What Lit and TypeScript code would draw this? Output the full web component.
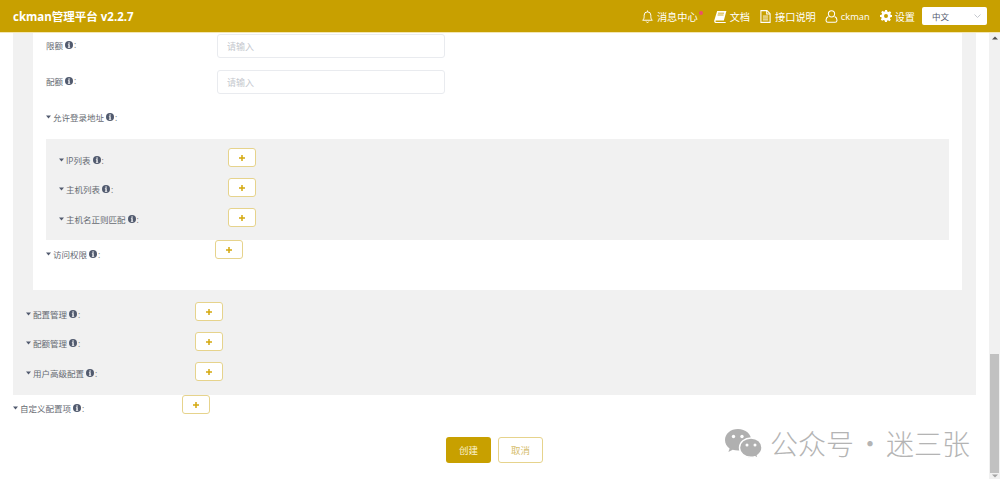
import { LitElement, html, css, svg } from "lit";
import { customElement } from "lit/decorators.js";

const info = html`<svg class="info" viewBox="0 0 16 16"><circle cx="8" cy="8" r="8" fill="#515a6e"/><rect x="6.8" y="2.8" width="2.6" height="2.6" fill="#fff"/><path d="M5.8 6.6h3.6v5.2h1v1.6H5.8v-1.6h1V8.2h-1z" fill="#fff"/></svg>`;
const caret = html`<svg class="caret" viewBox="0 0 6 4"><path d="M0 .3h6L3 3.7z" fill="#515a6e"/></svg>`;
const plus = svg`<path d="M3 0h2v3h3v2H5v3H3V5H0V3h3z" fill="#d4a80e"/>`;

const bell = html`<svg class="ic" viewBox="0 0 14 16" fill="none" stroke="#fff" stroke-width="1.2"><path d="M1 12.6c1.3-1 1.9-2.4 1.9-4.6V6.4a4.1 4.1 0 0 1 8.2 0V8c0 2.2.6 3.6 1.9 4.6z"/><path d="M5.5 14.3a1.6 1.6 0 0 0 3 0"/><path d="M7 .6v1.6"/></svg>`;
const book = html`<svg class="ic" viewBox="0 0 14 14"><path d="M3.4 1H13.4l-.3 1-2.5 9.2H2.6c-.8 0-1.2.4-1.1 1 .1.4.5.7 1.1.7h9.2l.9-.1-.2 1.2H2.4C1 14 0 13 .2 11.5z" fill="#fff"/><path d="M4.4 3.4h6.4M3.9 5.4h6.4" stroke="#c8a000" stroke-width=".9"/></svg>`;
const file = html`<svg class="ic" viewBox="0 0 12 15" fill="none" stroke="#fff" stroke-width="1.2"><path d="M.7.7h7l3.6 3.6v10H.7z"/><path d="M7.4.9v3.7h3.7" /><path d="M3 7h6M3 9.2h6M3 11.4h6" stroke-width="1"/></svg>`;
const user = html`<svg class="ic" viewBox="0 0 14 15" fill="none" stroke="#fff" stroke-width="1.2"><circle cx="7" cy="4.4" r="3.6"/><path d="M3.4 7.6C1.6 8.4.7 9.8.7 11.6v.4c0 1.2.9 2.2 2.2 2.2h8.2c1.3 0 2.2-1 2.2-2.2v-.4c0-1.8-.9-3.2-2.7-4"/></svg>`;
const cog = html`<svg class="ic cog" viewBox="0 0 24 24"><path fill="#fff" fill-rule="evenodd" d="M10 0h4l.6 3.2 2.3 1 2.7-1.9 2.9 2.9-1.9 2.7 1 2.3L24 10v4l-3.2.6-1 2.3 1.9 2.7-2.9 2.9-2.7-1.9-2.3 1L14 24h-4l-.6-3.2-2.3-1-2.7 1.9-2.9-2.9 1.9-2.7-1-2.3L0 14v-4l3.2-.6 1-2.3-1.9-2.7 2.9-2.9 2.7 1.9 2.3-1zM12 8a4 4 0 1 0 0 8 4 4 0 0 0 0-8z"/></svg>`;

@customElement("app-root")
export class AppRoot extends LitElement {
  static styles = css`
    :host { display: block; width: 1000px; height: 479px; overflow: hidden; position: relative; background: #fff;
      font-family: "Open Sans", "Noto Sans CJK SC", sans-serif; color: #666a72; font-size: 8.5px; }
    .hdr { height: 32px; background: #c8a000; border-bottom: 1px solid #f3e6b3; display: flex; align-items: center; padding: 0 13px; color: #fff; }
    .title { font-size: 11.5px; font-weight: 700; flex: 1; margin-top: -1px; }
    .nav { display: flex; align-items: center; font-size: 10.2px; margin-left: 10px; position: relative; }
    .nav.wide { margin-left: 16px; }
    .nav.tight { margin-left: 9px; }
    .nav.latin { font-size: 9.3px; margin-left: 9px; }
    .ic { height: 13px; width: 13px; margin-right: 3px; display: block; }
    .cog { width: 12px; height: 12px; }
    .dot { position: absolute; right: -5px; top: 2px; width: 4px; height: 4px; border-radius: 50%; background: #ed4f6b; }
    .sel { width: 65px; height: 18px; background: #fff; border-radius: 2px; margin-left: 7px; box-sizing: border-box; padding: 0 6px 0 10px; display: flex; align-items: center; justify-content: space-between; color: #515a6e; font-size: 8.5px; }
    .body { display: flex; height: 446px; }
    .main { width: 989px; padding-left: 13px; box-sizing: border-box; }
    .sb { width: 11px; background: #f1f1f1; display: flex; flex-direction: column; align-items: center; }
    .thumb { width: 9px; height: 119px; background: #c1c1c1; margin-top: auto; }
    .arr { height: 6px; width: 6px; display: block; margin-top: 2px; flex: none; }
    .arr.dn { margin-top: 0; }
    .outer { width: 963px; background: #f1f1f1; padding-bottom: 3px; }
    .card { margin: 0 14px 12px 20px; background: #fff; height: 257px; box-sizing: border-box; padding: 1px 13px 0; }
    .field { display: flex; height: 36px; }
    .field .lbl { width: 171px; flex: none; height: 21px; }
    input { width: 228px; height: 24px; box-sizing: border-box; border: 1px solid #e9ebef; border-radius: 3px; padding: 0 9px; font: inherit; font-size: 9px; outline: none; background: #fff; }
    input::placeholder { color: #c5c8ce; }
    .head { height: 22px; margin-bottom: 11px; }
    .head .lbl { height: 22px; }
    .inner { background: #f1f1f1; padding: 9px 0 2px 13px; width: 890px; }
    .row { display: flex; height: 30px; }
    .pad { padding-left: 13px; }
    .lbl { display: flex; align-items: center; white-space: nowrap; height: 24px; }
    .row .lbl { width: 169px; flex: none; }
    .row .lbl.up { height: 22px; }
    .row .lbl.low { height: 28px; }
    .row .lbl.mid { height: 26px; }
    .caret { width: 5px; height: 4px; margin-right: 2px; flex: none; }
    .info { width: 8px; height: 8px; margin: 0 1px 0 2px; flex: none; }
    .add { width: 28px; height: 19px; box-sizing: border-box; border: 1px solid #e6d38c; border-radius: 3px; background: #fff; display: flex; align-items: center; justify-content: center; }
    .add svg { width: 6px; height: 6px; display: block; }
    .acts { display: flex; justify-content: center; gap: 7px; margin-top: 12px; width: 963px; }
    .btn { width: 45px; height: 26px; box-sizing: border-box; border-radius: 3px; font-size: 9.5px; display: flex; align-items: center; justify-content: center; }
    .pri { background: #c8a000; color: #fbf3d4; }
    .sec { background: #fff; border: 1px solid #e6d38c; color: #d6be6e; }
    .wm { position: absolute; left: 724px; top: 423px; display: flex; align-items: center; color: #b4b4b4; font-size: 28px; font-family: "Noto Sans CJK SC", sans-serif; font-weight: 300; white-space: nowrap; }
    .wm svg { width: 38px; height: 31px; margin-right: 8px; }
    .sep { width: 32px; text-align: center; }
  `;

  private addBtn() {
    return html`<div class="add"><svg viewBox="0 0 8 8">${plus}</svg></div>`;
  }

  private row(t: string, cls = "") {
    return html`<div class="row"><div class="lbl ${cls}">${caret}${t} ${info}:</div>${this.addBtn()}</div>`;
  }

  render() {
    return html`
      <div class="hdr">
        <div class="title">ckman管理平台 v2.2.7</div>
        <div class="nav">${bell}<span>消息中心</span><i class="dot"></i></div>
        <div class="nav wide">${book}<span>文档</span></div>
        <div class="nav tight">${file}<span>接口说明</span></div>
        <div class="nav latin">${user}<span>ckman</span></div>
        <div class="nav">${cog}<span>设置</span></div>
        <div class="sel"><span>中文</span><svg width="7" height="4" viewBox="0 0 7 4" fill="none" stroke="#c5c8ce"><path d="M.5.5l3 3 3-3"/></svg></div>
      </div>
      <div class="body">
        <div class="main">
          <div class="outer">
            <div class="card">
              <div class="field"><div class="lbl">限额 ${info}:</div><input placeholder="请输入" /></div>
              <div class="field"><div class="lbl">配额 ${info}:</div><input placeholder="请输入" /></div>
              <div class="head"><div class="lbl">${caret}允许登录地址 ${info}:</div></div>
              <div class="inner">
                ${this.row("IP列表")}
                ${this.row("主机列表", "up")}
                ${this.row("主机名正则匹配", "up")}
              </div>
              ${this.row("访问权限", "low")}
            </div>
            <div class="pad">
              ${this.row("配置管理")}
              ${this.row("配额管理", "up")}
              ${this.row("用户高级配置", "up")}
            </div>
          </div>
          <div class="top">${this.row("自定义配置项", "mid")}</div>
          <div class="acts"><div class="btn pri">创建</div><div class="btn sec">取消</div></div>
        </div>
        <div class="sb">
          <svg class="arr" viewBox="0 0 6 6"><path d="M0 4.5L3 1.5l3 3z" fill="#505050"/></svg>
          <div class="thumb"></div>
          <svg class="arr dn" viewBox="0 0 6 6"><path d="M0 1.5l3 3 3-3z" fill="#a3a3a3"/></svg>
        </div>
      </div>
      <div class="wm">
        <svg viewBox="0 0 38 31">
          <path d="M14 1C6.5 1 1 5.8 1 12c0 3.4 1.7 6.3 4.6 8.4L4.4 24l4.3-2.2c1.7.5 3.4.8 5.3.8 7.5 0 13.3-4.9 13.3-10.6S21.500 1 14 1z" fill="#b0b0b0"/>
          <path d="M27 10c-6.300 0-11.500 4.300-11.500 9.700S20.700 29.300 27 29.300c1.400 0 2.800-.2 4-.6l3.300 1.800-.9-3C36 25.600 38 23 38 19.700 38 14.300 33.300 10 27 10z" fill="#b0b0b0" stroke="#fff" stroke-width="1.400"/>
          <circle cx="9.500" cy="8.500" r="1.700" fill="#fff"/><circle cx="18" cy="8.500" r="1.700" fill="#fff"/>
          <circle cx="23" cy="17" r="1.500" fill="#fff"/><circle cx="31" cy="17" r="1.500" fill="#fff"/>
        </svg>
        <span>公众号</span><span class="sep">·</span><span>迷三张</span>
      </div>
    `;
  }
}
